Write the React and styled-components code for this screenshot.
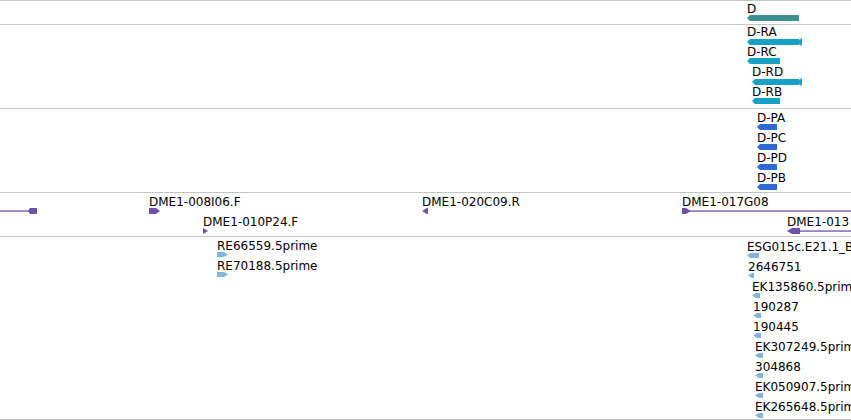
import React from 'react';
import styled, { createGlobalStyle } from 'styled-components';

const GlobalStyle = createGlobalStyle`
  html, body {
    margin: 0;
    padding: 0;
    background: #fff;
  }
`;

const Browser = styled.div`
  width: 851px;
  overflow: hidden;
  border-top: 1px solid #c4c4c4;
  font-family: 'DejaVu Sans', 'Liberation Sans', sans-serif;
`;

const Track = styled.div`
  position: relative;
  height: ${(p) => p.$height}px;
  border-bottom: 1px solid #c4c4c4;
  overflow: hidden;
`;

const Feature = styled.div`
  position: absolute;
  left: ${(p) => p.$x}px;
  top: ${(p) => p.$top}px;
  display: flex;
  flex-direction: column;
  align-items: flex-start;
`;

const Label = styled.span`
  height: 12px;
  font-size: 12px;
  line-height: 12px;
  color: #000;
  white-space: nowrap;
`;

const Svg = styled.svg`
  display: block;
`;

const arrow = (x0, x1, y0, y1, dir, tip = 3) => {
  const mid = (y0 + y1) / 2;
  return dir === 'left'
    ? `${x0},${mid} ${x0 + tip},${y0} ${x1},${y0} ${x1},${y1} ${x0 + tip},${y1}`
    : `${x0},${y0} ${x1 - tip},${y0} ${x1},${mid} ${x1 - tip},${y1} ${x0},${y1}`;
};

const Glyph = ({ f, color, h }) => {
  if (f.fin) {
    const H = h + 2;
    return (
      <Svg width={f.w} height={H}>
        <polygon points={arrow(0, f.w - 3, 1, H - 1, 'left')} fill={color} />
        <polygon points={`${f.w - 6},${H / 2} ${f.w},0 ${f.w},${H}`} fill={color} />
      </Svg>
    );
  }
  if (f.line) {
    const { bx, bw, lx, lw } = f.line;
    return (
      <Svg width={f.w} height={h}>
        <rect x={lx} y={h / 2 - 0.6} width={lw} height={1.3} fill={color} />
        <polygon points={arrow(bx, bx + bw, 0, h, f.dir, f.tip ?? 3)} fill={color} />
      </Svg>
    );
  }
  return (
    <Svg width={f.w} height={h}>
      <polygon points={arrow(0, f.w, 0, h, f.dir, f.tip ?? 3)} fill={color} />
    </Svg>
  );
};

const tracks = [
  {
    height: 23, color: '#3f9191', barTop: 14, barH: 6,
    features: [{ label: 'D', x: 747, row: 0, w: 52, dir: 'left' }],
  },
  {
    height: 83, color: '#17a1c4', barTop: 13, barH: 6,
    features: [
      { label: 'D-RA', x: 747, row: 0, w: 55, fin: true },
      { label: 'D-RC', x: 747, row: 1, w: 33, dir: 'left' },
      { label: 'D-RD', x: 752, row: 2, w: 50, fin: true },
      { label: 'D-RB', x: 752, row: 3, w: 28, dir: 'left' },
    ],
  },
  {
    height: 83, color: '#2f69d2', barTop: 15, barH: 6,
    features: ['D-PA', 'D-PC', 'D-PD', 'D-PB'].map((label, row) => ({
      label, x: 757, row, w: 20, dir: 'left',
    })),
  },
  {
    height: 43, color: '#6e52aa', barTop: 15, barH: 6,
    features: [
      { label: '', x: 0, row: 0, w: 37, dir: 'left', tip: 2, line: { bx: 28, bw: 9, lx: 0, lw: 29 } },
      { label: 'DME1-008I06.F', x: 149, row: 0, w: 11, dir: 'right', tip: 4 },
      { label: 'DME1-010P24.F', x: 203, row: 1, w: 5, dir: 'right', tip: 5 },
      { label: 'DME1-020C09.R', x: 422, row: 0, w: 6, dir: 'left', tip: 5 },
      { label: 'DME1-017G08', x: 682, row: 0, w: 170, dir: 'right', tip: 5, line: { bx: 0, bw: 9, lx: 8, lw: 162 } },
      { label: 'DME1-013', x: 787, row: 1, w: 70, dir: 'left', tip: 5, line: { bx: 0, bw: 13, lx: 12, lw: 58 } },
    ],
  },
  {
    height: 182, color: '#80b6de', barTop: 15, barH: 5,
    features: [
      { label: 'RE66559.5prime', x: 217, row: 0, w: 11, dir: 'right', tip: 4 },
      { label: 'RE70188.5prime', x: 217, row: 1, w: 11, dir: 'right', tip: 4 },
      { label: 'ESG015c.E21.1_B', x: 747, row: 0, w: 12, dir: 'left', tip: 3, dy: 1 },
      { label: '2646751', x: 748, row: 1, w: 6, dir: 'left', tip: 4, dy: 1 },
      { label: 'EK135860.5prime', x: 752, row: 2, w: 8, dir: 'left', tip: 4, dy: 1 },
      { label: '190287', x: 753, row: 3, w: 8, dir: 'left', tip: 4, dy: 1 },
      { label: '190445', x: 753, row: 4, w: 8, dir: 'left', tip: 4, dy: 1 },
      { label: 'EK307249.5prime', x: 755, row: 5, w: 8, dir: 'left', tip: 4, dy: 1 },
      { label: '304868', x: 755, row: 6, w: 8, dir: 'left', tip: 4, dy: 1 },
      { label: 'EK050907.5prime', x: 755, row: 7, w: 8, dir: 'left', tip: 4, dy: 1 },
      { label: 'EK265648.5prime', x: 755, row: 8, w: 8, dir: 'left', tip: 4, dy: 1 },
    ],
  },
];

export default function App() {
  return (
    <>
      <GlobalStyle />
      <Browser>
        {tracks.map((t, i) => (
          <Track key={i} $height={t.height}>
            {t.features.map((f, j) => (
              <Feature key={j} $x={f.x} $top={f.row * 20 + t.barTop - 12 + (f.dy || 0)}>
                <Label>{f.label}</Label>
                <Glyph f={f} color={t.color} h={t.barH} />
              </Feature>
            ))}
          </Track>
        ))}
      </Browser>
    </>
  );
}
